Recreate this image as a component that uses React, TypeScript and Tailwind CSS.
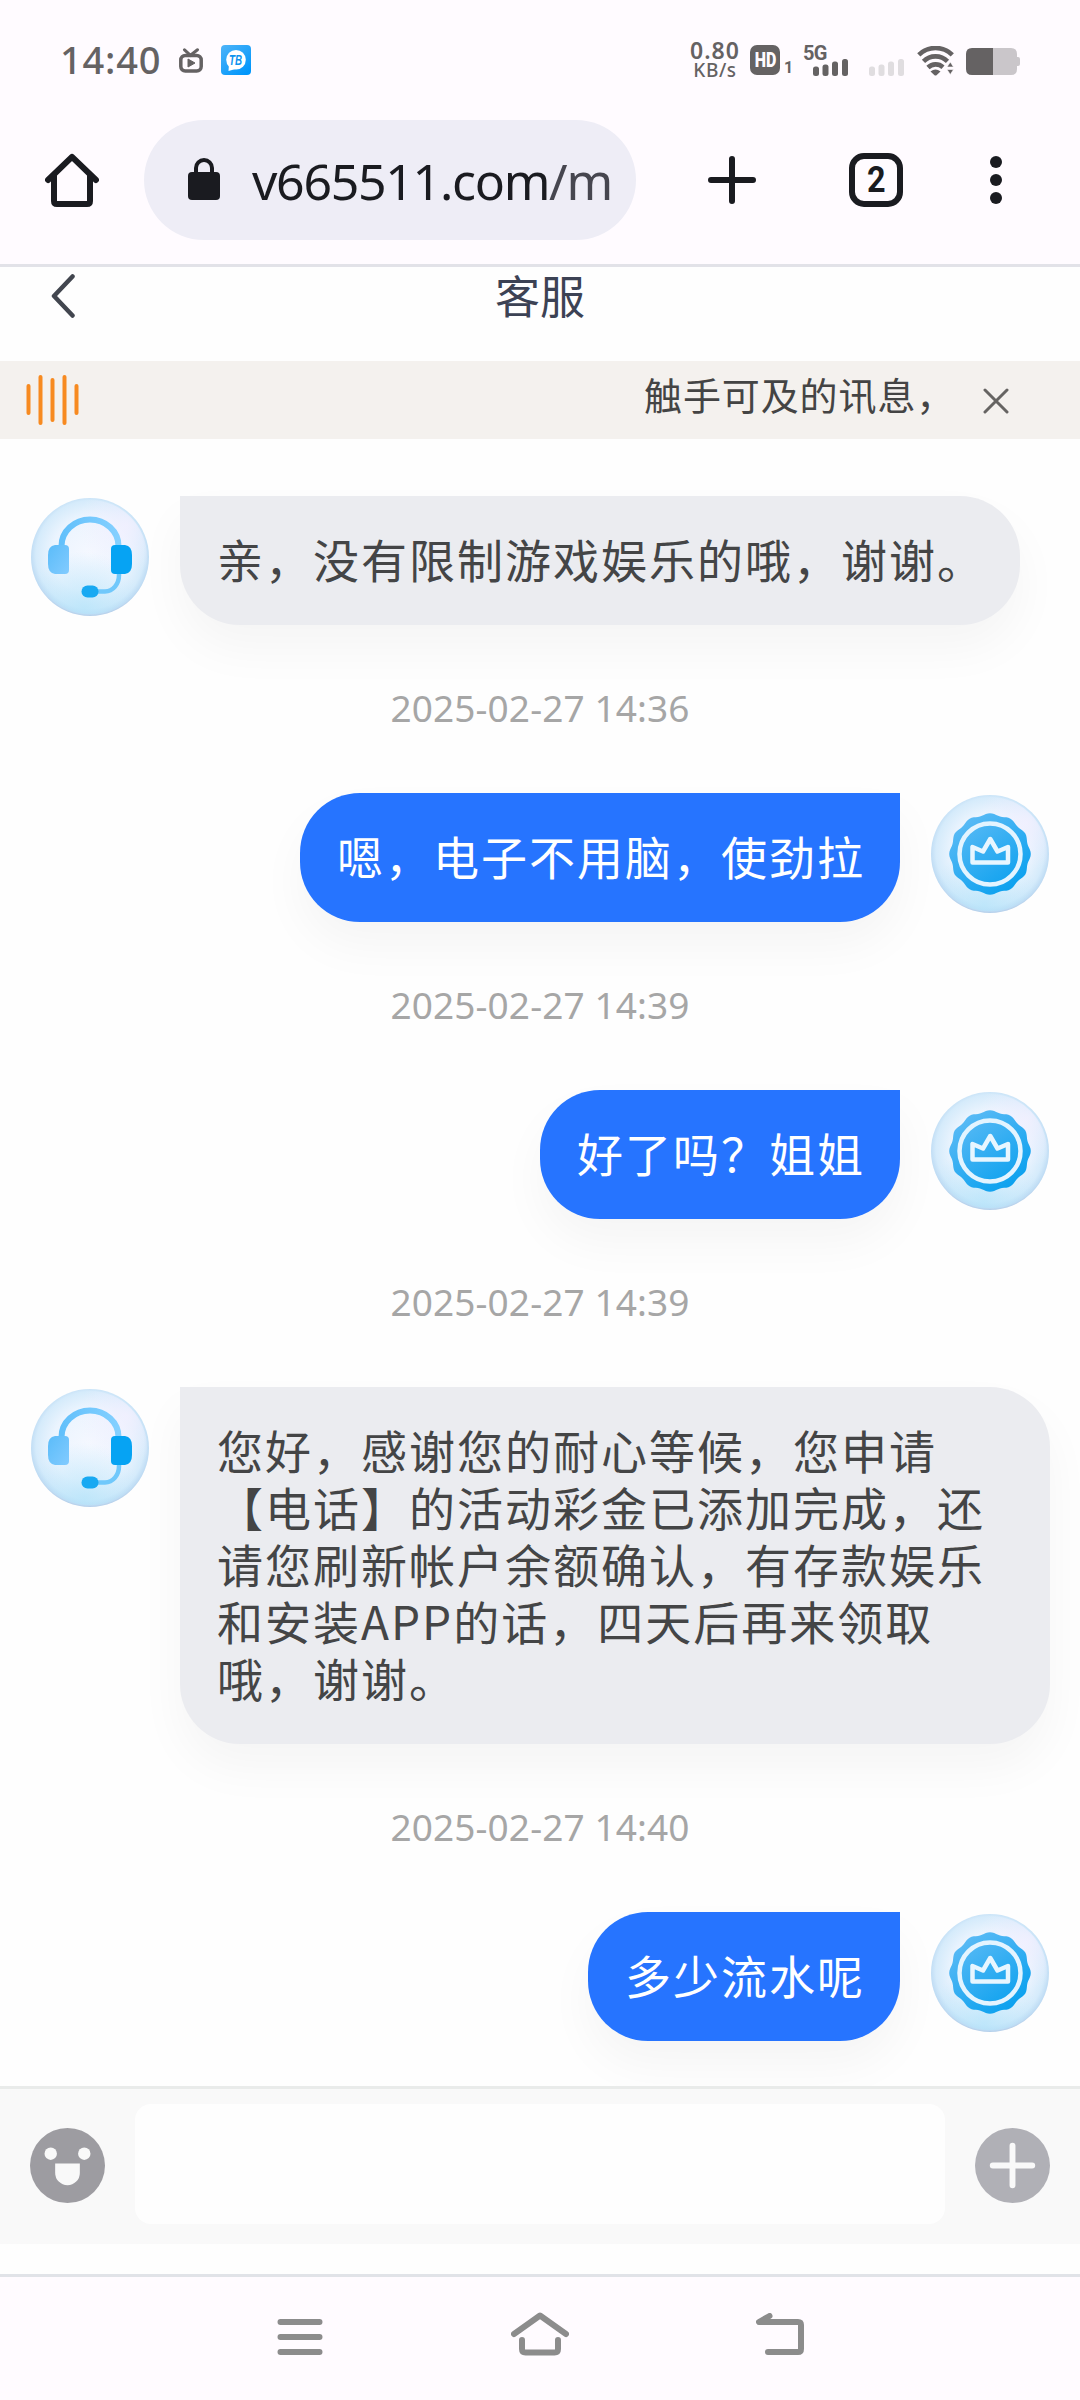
import type { ReactNode } from "react";

type Message = {
  id: number;
  from: "agent" | "me";
  text: string;
  time?: string;
};

const messages: Message[] = [
  { id: 1, from: "agent", text: "亲，没有限制游戏娱乐的哦，谢谢。", time: "2025-02-27 14:36" },
  { id: 2, from: "me", text: "嗯，电子不用脑，使劲拉", time: "2025-02-27 14:39" },
  { id: 3, from: "me", text: "好了吗？姐姐", time: "2025-02-27 14:39" },
  {
    id: 4,
    from: "agent",
    text: "您好，感谢您的耐心等候，您申请\n【电话】的活动彩金已添加完成，还\n请您刷新帐户余额确认，有存款娱乐\n和安装APP的话，四天后再来领取\n哦，谢谢。",
    time: "2025-02-27 14:40",
  },
  { id: 5, from: "me", text: "多少流水呢" },
];

// 12-lobed rosette behind the crown
const rosette =
  Array.from({ length: 121 }, (_, i) => {
    const a = (i / 120) * Math.PI * 2;
    const r = 39.8 + 1 * Math.cos(a * 12);
    const x = 60 + r * Math.sin(a);
    const y = 60 - r * Math.cos(a);
    return `${i === 0 ? "M" : "L"}${x.toFixed(2)} ${y.toFixed(2)}`;
  }).join("") + "Z";

function AvatarBase({ id, children }: { id: string; children: ReactNode }) {
  return (
    <svg viewBox="0 0 120 120" className="mt-px w-[120px] h-[120px] shrink-0">
      <defs>
        <radialGradient id={`${id}-glass`} cx="0.5" cy="0.48" r="0.52">
          <stop offset="0" stopColor="#f5f8ff" />
          <stop offset="0.62" stopColor="#ebf4fe" />
          <stop offset="0.88" stopColor="#d5ebfb" />
          <stop offset="0.97" stopColor="#bfdcf4" />
          <stop offset="1" stopColor="#b3cde8" />
        </radialGradient>
        <radialGradient id={`${id}-shine`} cx="0.82" cy="0.22" r="0.42">
          <stop offset="0" stopColor="#f3f0ff" stopOpacity="0.85" />
          <stop offset="1" stopColor="#f3f0ff" stopOpacity="0" />
        </radialGradient>
        <radialGradient id={`${id}-low`} cx="0.45" cy="0.95" r="0.5">
          <stop offset="0" stopColor="#b4e4fa" stopOpacity="0.7" />
          <stop offset="1" stopColor="#b4e4fa" stopOpacity="0" />
        </radialGradient>
        <linearGradient id={`${id}-blue`} x1="0.1" y1="0" x2="0.8" y2="1">
          <stop offset="0" stopColor="#62bdf6" />
          <stop offset="1" stopColor="#069fee" />
        </linearGradient>
      </defs>
      <circle cx="60" cy="60" r="59" fill={`url(#${id}-glass)`} />
      <circle cx="60" cy="60" r="57" fill={`url(#${id}-low)`} />
      <circle cx="60" cy="60" r="57" fill={`url(#${id}-shine)`} />
      {children}
    </svg>
  );
}

function AgentAvatar({ id }: { id: string }) {
  return (
    <AvatarBase id={id}>
      <defs>
        <linearGradient id={`${id}-band`} x1="0" y1="0" x2="1" y2="0">
          <stop offset="0" stopColor="#62c0fb" />
          <stop offset="1" stopColor="#84d0ff" />
        </linearGradient>
        <linearGradient id={`${id}-cup`} x1="0" y1="0" x2="1" y2="1">
          <stop offset="0" stopColor="#5bbcf9" />
          <stop offset="1" stopColor="#82cbff" />
        </linearGradient>
      </defs>
      <path d="M31.5 50V49a28.500 26.500 0 0 1 57 0v1" fill="none" stroke={`url(#${id}-band)`} strokeWidth="6" />
      <path d="M89 77v1c0 9-6 16.500-14 16.500h-9" fill="none" stroke="#70c8fb" strokeWidth="4.500" />
      <path d="M25 48h10q4 0 4 4v21q0 4-4 4H25q-7-1-7-10v-9q0-9 7-10z" fill={`url(#${id}-cup)`} />
      <path d="M85 48h10q7 1 7 10v9q0 9-7 10H85q-4 0-4-4V52q0-4 4-4z" fill="#06a3f3" />
      <rect x="51.500" y="88.500" width="17" height="12" rx="6" fill="#18a9f2" />
    </AvatarBase>
  );
}

function UserAvatar({ id }: { id: string }) {
  return (
    <AvatarBase id={id}>
      <path d={rosette} fill={`url(#${id}-blue)`} />
      <circle cx="60" cy="60" r="30.500" fill="none" stroke="#e3f4ff" strokeWidth="4.500" />
      <path
        d="M42.500 53v15.500h35.500V53l-10.500 4.500-7.250-12.500-7.250 12.500z"
        fill="none"
        stroke="#e8f6ff"
        strokeWidth="4.500"
        strokeLinejoin="round"
      />
    </AvatarBase>
  );
}

function SignalBars({ className }: { className: string }) {
  return (
    <svg viewBox="0 0 36 17" className={className} fill="currentColor">
      <rect x="0" y="7.500" width="6" height="9.500" rx="2.500" />
      <rect x="9.500" y="5.500" width="6" height="11.500" rx="2.500" />
      <rect x="19" y="2.500" width="6" height="14.500" rx="2.500" />
      <rect x="29" y="0" width="6" height="17" rx="2.500" />
    </svg>
  );
}

function StatusBar() {
  return (
    <div className="flex h-[120px] items-start pl-[60px] pr-[60px] text-[#656263]">
      <span className="mt-[32px] w-[119px] whitespace-nowrap font-['Noto_Sans',sans-serif] text-[38px] leading-[54px] font-medium tracking-[0.8px]">
        14:40
      </span>
      <svg viewBox="0 0 24 25" className="mt-[48px] h-[25px] w-[24px]" fill="none" stroke="currentColor" strokeWidth="3.500">
        <rect x="1.800" y="7.500" width="20.400" height="15.500" rx="4.500" />
        <path d="M5.500 1.800l6 5.500 7-5.500" strokeLinecap="round" strokeWidth="3" />
        <path d="M9 11v8l7-4z" fill="currentColor" strokeWidth="1" strokeLinejoin="round" />
      </svg>
      <svg viewBox="0 0 30 30" className="mt-[45px] ml-[18px] size-[30px]">
        <defs>
          <linearGradient id="app-badge" x1="0" y1="0" x2="0.8" y2="1">
            <stop offset="0" stopColor="#4fb4f8" />
            <stop offset="1" stopColor="#0096fb" />
          </linearGradient>
        </defs>
        <rect width="30" height="30" rx="4" fill="url(#app-badge)" />
        <circle cx="15" cy="14.700" r="9.800" fill="#fff" />
        <path d="M8 19l-.5 7 7-2z" fill="#fff" />
        <text
          x="14.500"
          y="20"
          textAnchor="middle"
          textLength="13"
          lengthAdjust="spacingAndGlyphs"
          fontSize="15"
          fontWeight="700"
          fontStyle="italic"
          fontFamily="Liberation Sans, sans-serif"
          fill="#0c93ee"
        >
          TB
        </text>
      </svg>

      <div className="ml-auto flex">
        <div className="mt-[40px] flex w-[50px] flex-col items-center font-['Noto_Sans',sans-serif] font-semibold">
          <span className="text-[23px] leading-[21px] tracking-[1px]">0.80</span>
          <span className="text-[19px] leading-[19px] font-medium tracking-[0.6px]">KB/s</span>
        </div>
        <span className="mt-[45px] ml-[10px] flex size-[30px] items-center justify-center rounded-[7px] bg-[#656263] font-['Roboto',sans-serif] text-[20px] leading-[20px] font-black text-[#fffbff]">
          <span className="scale-x-[0.8]">HD</span>
        </span>
        <span className="mt-[60px] ml-[4px] w-[12px] font-['Roboto',sans-serif] text-[16px] leading-[16px] font-bold">1</span>
        <div className="mt-[43px] ml-[7px] flex w-[46px] flex-col">
          <span className="h-[16px] pt-[3px] font-['Roboto',sans-serif] text-[20px] leading-[14px] font-bold tracking-[-0.8px]">5G</span>
          <SignalBars className="ml-[10px] h-[17px] w-[36px] shrink-0" />
        </div>
        <SignalBars className="mt-[59px] ml-[20px] h-[17px] w-[36px] text-[#e0dde0]" />
        <svg viewBox="0 0 37 30" className="mt-[46px] ml-[12px] h-[30px] w-[37px]" fill="none" stroke="currentColor" strokeWidth="4.600">
          <path d="M1.800 8.800a24 24 0 0 1 33.500 0" />
          <path d="M6.500 15.300a17 17 0 0 1 24 0" />
          <path d="M11 21.500a11 11 0 0 1 15-.3" />
          <path d="M13.500 25.500q5-4 10 0l-4 3.700q-1 .6-2 0z" fill="currentColor" stroke="none" />
          <path d="M30 21l3.300-5 3.200 5zM30 23.500l3.300 5 3.200-5z" fill="currentColor" stroke="#fffbff" strokeWidth="0.600" />
        </svg>
        <svg viewBox="0 0 54 27" className="mt-[48px] ml-[12px] h-[27px] w-[54px]">
          <path d="M26 0h19q6 0 6 6v3h1q2 0 2 2v5q0 2-2 2h-1v3q0 6-6 6H26z" fill="#cac6ca" />
          <path d="M6 0h21v27H6q-6 0-6-6V6q0-6 6-6z" fill="currentColor" />
        </svg>
      </div>
    </div>
  );
}

function BrowserBar() {
  return (
    <div className="flex h-[147px] items-start border-b-[3px] border-[#e2e2e8] text-[#1a1b20]">
      <svg viewBox="0 0 54 54" className="mt-[33px] ml-[45px] size-[54px]" fill="none" stroke="currentColor" strokeWidth="6">
        <path d="M3 27L27 3.800 51 27" strokeLinecap="round" strokeLinejoin="round" />
        <path d="M9 22v26q0 3 3 3h30q3 0 3-3V22" />
      </svg>
      <div className="ml-[45px] flex h-[120px] w-[492px] items-center rounded-full bg-[#eeedf6] pl-[44px]">
        <svg viewBox="0 0 32 42" className="-mt-[2px] h-[42px] w-[32px]">
          <path d="M8 16V10a8 8 0 0 1 16 0v6" fill="none" stroke="currentColor" strokeWidth="4" />
          <rect y="14" width="32" height="28" rx="4" fill="currentColor" />
        </svg>
        <span className="mt-px ml-[32px] whitespace-nowrap font-['Noto_Sans',sans-serif] text-[50px] leading-[60px] tracking-[-1.3px]">
          v665511.com<span className="text-[#46464f]">/m</span>
        </span>
      </div>
      <svg viewBox="0 0 48 48" className="mt-[36px] ml-[72px] size-[48px]" stroke="currentColor" strokeWidth="6" strokeLinecap="round">
        <path d="M24 3v42M3 24h42" />
      </svg>
      <span className="mt-[33px] ml-[93px] flex size-[54px] items-center justify-center rounded-[15px] border-[6px] border-[#1a1b20] font-['Roboto',sans-serif] text-[36px] font-bold">
        <span className="scale-x-90">2</span>
      </span>
      <span className="mt-[36px] ml-[87px] flex flex-col gap-[6px]">
        <i className="size-[12px] rounded-full bg-[#1a1b20]" />
        <i className="size-[12px] rounded-full bg-[#1a1b20]" />
        <i className="size-[12px] rounded-full bg-[#1a1b20]" />
      </span>
    </div>
  );
}

function ChatHeader() {
  return (
    <div className="grid h-[94px] grid-cols-3 items-start">
      <svg viewBox="0 0 24 44" className="mt-[7px] ml-[51px] h-[44px] w-[24px]" fill="none" stroke="#42464f" strokeWidth="4.500" strokeLinecap="round" strokeLinejoin="round">
        <path d="M21.500 2.500L3 22l18.500 19.500" />
      </svg>
      <h1 className="text-center text-[45px] leading-[56px] text-[#3c4254]">客服</h1>
    </div>
  );
}

function NoticeBar() {
  return (
    <div className="flex h-[78px] items-start bg-[#f4f1ee]">
      <svg viewBox="0 0 54 52" className="mt-[13px] ml-[26px] h-[52px] w-[54px]" stroke="#f78a20" strokeWidth="4" strokeLinecap="round">
        <path d="M2.500 12v27M14.500 3v46M26.500 6v40M38.500 3v46M50.500 12v27" />
      </svg>
      <p className="ml-auto w-[311px] whitespace-nowrap text-[38px] leading-[66px] tracking-[0.9px] text-[#444]">触手可及的讯息，</p>
      <svg viewBox="0 0 26 26" className="mt-[27px] mr-[71px] ml-[28px] size-[26px]" stroke="#666462" strokeWidth="3" strokeLinecap="round">
        <path d="M2 2l22 22M24 2L2 24" />
      </svg>
    </div>
  );
}

function MessageRow({ message }: { message: Message }) {
  if (message.from === "me") {
    return (
      <div className="flex justify-end gap-[30px] pr-[30px]">
        <p className="rounded-[60px] rounded-tr-none bg-[#2674ff] pt-[34px] pr-[35px] pb-[38px] pl-[37px] text-[46px] leading-[57px] tracking-[2px] whitespace-pre text-white shadow-[0_24px_48px_rgba(0,0,0,0.04)]">
          {message.text}
        </p>
        <UserAvatar id={`user-${message.id}`} />
      </div>
    );
  }

  return (
    <div className="flex gap-[30px] pr-[30px] pl-[30px]">
      <AgentAvatar id={`agent-${message.id}`} />
      <p
        className={`rounded-[60px] rounded-tl-none bg-[#ebecf0] pt-[34px] pr-[35px] pb-[38px] pl-[37px] text-[46px] leading-[57px] tracking-[2px] whitespace-pre text-[#444546] shadow-[0_24px_48px_rgba(0,0,0,0.04)] ${
          message.text.includes("\n") ? "w-[870px]" : ""
        }`}
      >
        {message.text}
      </p>
    </div>
  );
}

function InputBar() {
  return (
    <div className="flex h-[158px] items-start border-t-[3px] border-[#e9ebea] bg-[#f9f9f9]">
      <svg viewBox="0 0 76 76" className="mt-[39px] ml-[30px] size-[75px]">
        <circle cx="38" cy="38" r="38" fill="#9d9ca1" />
        <circle cx="21" cy="26" r="6.300" fill="#f9f9f9" />
        <circle cx="55" cy="26" r="6.300" fill="#f9f9f9" />
        <path d="M25.500 36h25v9.500a12.500 12.500 0 0 1-25 0z" fill="#f9f9f9" />
      </svg>
      <div className="mt-[15px] ml-[30px] h-[120px] w-[810px] rounded-[16px] bg-[#fefefe]" />
      <svg viewBox="0 0 76 76" className="mt-[39px] ml-[30px] size-[75px]">
        <circle cx="38" cy="38" r="38" fill="#b0b0b6" />
        <path d="M38 18v40M18 38h40" stroke="#f9f9f9" strokeWidth="6" strokeLinecap="round" />
      </svg>
    </div>
  );
}

function SystemNav() {
  return (
    <div className="flex h-[126px] items-start border-t-[3px] border-[#e1e3e8] bg-[#fffbff] text-[#8c8c8c]">
      <svg viewBox="0 0 46 36" className="mt-[42px] ml-[277px] h-[36px] w-[46px]" stroke="currentColor" strokeWidth="6" strokeLinecap="round">
        <path d="M3.500 3h39M3.500 18h39M3.500 33h39" />
      </svg>
      <svg viewBox="0 0 58 44" className="mt-[35px] ml-[188px] h-[44px] w-[58px]" fill="none" stroke="currentColor" strokeWidth="6" strokeLinecap="round" strokeLinejoin="round">
        <path d="M3 22L29 3.500 55 22" />
        <path d="M11 28v9q0 3.500 3.500 3.500h29q3.500 0 3.500-3.500v-9" />
      </svg>
      <svg viewBox="0 0 48 43" className="mt-[36px] ml-[187px] h-[43px] w-[48px]" fill="none" stroke="currentColor" strokeWidth="6" strokeLinecap="round" strokeLinejoin="round">
        <path d="M13.500 3L3 9h39q3 0 3 3v24q0 3-3 3H12" />
      </svg>
    </div>
  );
}

export default function App() {
  return (
    <div className="flex h-[2400px] w-[1080px] flex-col overflow-hidden bg-[#fefefe] font-['Noto_Sans_CJK_SC',sans-serif] [text-spacing-trim:space-all]">
      <div className="bg-[#fffbff]">
        <StatusBar />
        <BrowserBar />
      </div>
      <ChatHeader />
      <NoticeBar />
      <main className="flex min-h-0 flex-1 flex-col overflow-hidden pt-[57px]">
        {messages.map((message) => (
          <div key={message.id} className="shrink-0">
            <MessageRow message={message} />
            {message.time && (
              <div className="flex h-[168px] items-center justify-center pb-[2px] font-['Noto_Sans',sans-serif] text-[37px] tracking-[0.1px] text-[#a6a6a6]">
                {message.time}
              </div>
            )}
          </div>
        ))}
      </main>
      <InputBar />
      <div className="h-[30px]" />
      <SystemNav />
    </div>
  );
}
